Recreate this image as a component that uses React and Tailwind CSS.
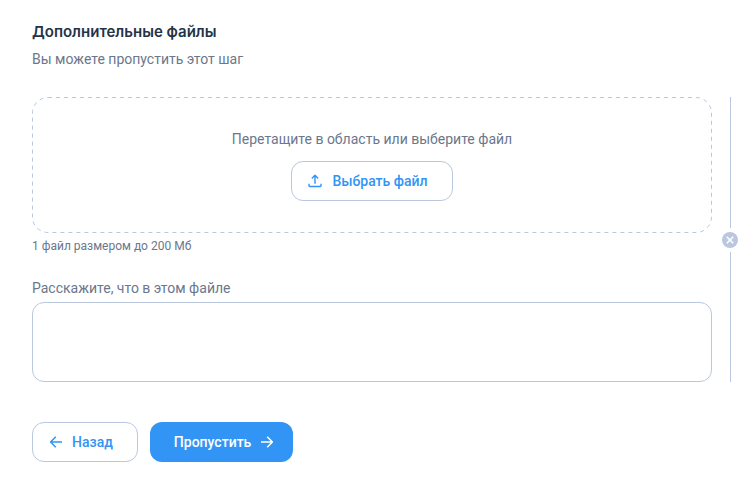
import React, { useState } from "react"

const ArrowIcon = ({ className }) => (
  <svg
    className={className}
    width="12"
    height="12"
    viewBox="0 0 12 12"
    fill="none"
    stroke="currentColor"
    strokeWidth="1.5"
    aria-hidden="true"
  >
    <path d="M0 6h11.2M6.2 .8 11.4 6l-5.2 5.2" />
  </svg>
)

const UploadIcon = () => (
  <svg
    width="14"
    height="14"
    viewBox="0 0 14 14"
    fill="none"
    stroke="currentColor"
    strokeWidth="1.4"
    strokeLinejoin="round"
    aria-hidden="true"
  >
    <path d="M7 9.7V1.8M3.8 4.5 7 1.3l3.2 3.2M1 9.7v2.1q0 .7.7.7h10.6q.7 0 .7-.7V9.7" />
  </svg>
)

const RemoveIcon = () => (
  <svg width="16" height="16" viewBox="0 0 16 16" aria-hidden="true">
    <circle cx="8" cy="8" r="8" fill="#bac7de" />
    <path d="m4.8 4.8 6.4 6.4m0-6.4-6.4 6.4" stroke="#fff" strokeWidth="1.6" />
  </svg>
)

const App = () => {
  const [description, setDescription] = useState("")

  return (
    <main className="min-h-screen bg-white pl-8 pr-[15px] py-5 font-['Roboto',sans-serif] text-sm text-[#6b778c]">
      <h1 className="font-['Inter',sans-serif] text-[15px] leading-6 font-semibold text-[#253346]">
        Дополнительные файлы
      </h1>
      <p className="mt-[3px] leading-6">Вы можете пропустить этот шаг</p>

      <div className="mt-[26px] flex gap-[10px]">
        <div className="min-w-0 flex-1">
          {/* Drop zone */}
          <div className="relative flex h-[136px] flex-col items-center justify-center gap-2.5 pb-0.5">
            <svg
              className="pointer-events-none absolute inset-0 h-full w-full overflow-visible"
              aria-hidden="true"
            >
              <rect
                x="0.5"
                y="0.5"
                rx="15.5"
                className="h-[calc(100%-1px)] w-[calc(100%-1px)]"
                fill="none"
                stroke="#bac7de"
                strokeDasharray="4 4"
              />
            </svg>
            <p className="leading-6">Перетащите в область или выберите файл</p>
            <button
              type="button"
              className="flex h-10 items-center gap-2.5 rounded-xl border border-[#bac7de] pl-4 pr-6 font-medium text-[#3294f4]"
            >
              <UploadIcon />
              Выбрать файл
            </button>
          </div>
          <p className="mt-[5px] text-xs leading-4">1 файл размером до 200 Мб</p>

          {/* Description */}
          <label htmlFor="description" className="mt-[22px] block leading-6">
            Расскажите, что в этом файле
          </label>
          <textarea
            id="description"
            value={description}
            onChange={(e) => setDescription(e.target.value)}
            className="mt-0.5 block h-20 w-full resize-none rounded-xl border border-[#bac7de] px-4 py-3 outline-none"
          />
        </div>

        {/* Remove line */}
        <div className="flex flex-col items-center gap-1">
          <div className="w-px flex-1 bg-[#bac7de]"></div>
          <button type="button" aria-label="Удалить файл">
            <RemoveIcon />
          </button>
          <div className="w-px flex-1 bg-[#bac7de]"></div>
        </div>
      </div>

      {/* Navigation */}
      <div className="mt-10 flex gap-3 font-medium">
        <button
          type="button"
          className="flex h-10 items-center gap-2.5 rounded-xl border border-[#bac7de] pl-[17px] pr-6 text-[#3294f4]"
        >
          <ArrowIcon className="rotate-180" />
          Назад
        </button>
        <button
          type="button"
          className="flex h-10 items-center gap-2.5 rounded-xl bg-[#3294f4] pl-6 pr-5 text-white"
        >
          Пропустить
          <ArrowIcon />
        </button>
      </div>
    </main>
  )
}

export default App
